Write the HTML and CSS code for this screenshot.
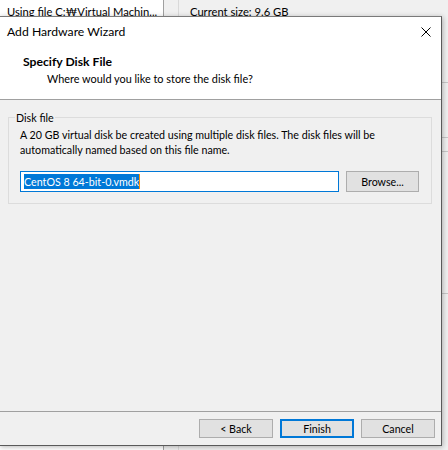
FILE: index.html
```html
<!DOCTYPE html>
<html>
<head>
<meta charset="utf-8">
<link rel="stylesheet" href="styles.css">
</head>
<body>
<div class="desk">
  <div class="bg-win">
    <div class="bg-left">
      <div class="bg-file">Using file C:₩Virtual Machin...</div>
    </div>
    <div class="bg-mid"></div>
    <div class="bg-right">
      <div class="bg-size">Current size: 9.6 GB</div>
      <div class="bg-row r1"></div>
      <div class="bg-row r2"></div>
      <div class="bg-row r3"></div>
      <div class="bg-row r4"></div>
    </div>
  </div>

  <div class="dialog">
    <div class="titlebar">
      <span class="title">Add Hardware Wizard</span>
      <svg class="close" width="10" height="10" viewBox="0 0 10 10">
        <path d="M0.5 0.5 L9.5 9.5 M9.5 0.5 L0.5 9.5" stroke="#000" stroke-width="1" fill="none"/>
      </svg>
    </div>
    <div class="header">
      <div class="h-title">Specify Disk File</div>
      <div class="h-sub">Where would you like to store the disk file?</div>
    </div>
    <div class="content">
      <fieldset class="group">
        <legend class="legend">Disk file</legend>
        <p class="desc">A 20 GB virtual disk be created using multiple disk files. The disk files will be automatically named based on this file name.</p>
        <div class="file-row">
          <div class="input"><span class="sel">CentOS 8 64-bit-0.vmdk</span></div>
          <button class="btn browse">Browse...</button>
        </div>
      </fieldset>
    </div>
    <div class="footer">
      <button class="btn">&lt; Back</button>
      <button class="btn default">Finish</button>
      <button class="btn">Cancel</button>
    </div>
  </div>
</div>
</body>
</html>
```

FILE: styles.css
```css
* { box-sizing: border-box; }
html, body { margin: 0; padding: 0; }
body {
  font-family: Lato, "Noto Sans", sans-serif;
  font-size: 10.7px;
  color: #000;
  background: #f0f0f0;
}
.desk {
  position: relative;
  width: 448px;
  height: 450px;
  overflow: hidden;
  background: #f0f0f0;
}
.bg-win {
  display: grid;
  grid-template-columns: 164px 15px 1fr;
  height: 450px;
}
.bg-left {
  background: #fff;
  border-right: 1px solid #a0a0a0;
}
.bg-file {
  padding: 4px 0 0 7px;
  line-height: 15px;
  font-size: 11.2px;
  white-space: nowrap;
}
.bg-mid {
  border-right: 1px solid #d9d9d9;
}
.bg-right {
  display: flex;
  flex-direction: column;
}
.bg-size {
  padding: 4px 0 0 11px;
  line-height: 15px;
  font-size: 11.2px;
  height: 82px;
}
.bg-row { border-bottom: 1px solid #c8c8c8; }
.r1 { height: 1px; }
.r2 { height: 55px; }
.r3 { height: 14px; }
.r4 { height: 142px; }

.dialog {
  position: absolute;
  left: -1px;
  top: 16px;
  width: 443px;
  height: 430px;
  border: 1px solid #7a7a7a;
  border-right-color: #5a5a5a;
  border-bottom-color: #5a5a5a;
  background: #f0f0f0;
  box-shadow: 1px 1px 5px rgba(0,0,0,0.28);
  display: flex;
  flex-direction: column;
}
.titlebar {
  height: 30px;
  background: #fff;
  display: flex;
  align-items: center;
  justify-content: space-between;
  padding: 0 10px 0 7px;
}
.title {
  line-height: 30px;
  font-size: 12.2px;
}
.close { display: block; }
.header {
  height: 53px;
  background: #fff;
  border-bottom: 1px solid #a0a0a0;
  padding: 7px 0 0 23px;
}
.h-title {
  font-weight: bold;
  font-size: 12.2px;
  line-height: 16px;
}
.h-sub {
  margin: 1px 0 0 24px;
  line-height: 16px;
  font-size: 10.9px;
}
.content {
  flex: 1;
  padding: 10px 9px 0 8px;
}
.group {
  margin: 0;
  border: 1px solid #dcdcdc;
  padding: 2px 11px 11px 11px;
  min-width: 0;
}
.legend {
  padding: 0 1px;
  margin-left: -5px;
  line-height: 15px;
}
.desc {
  margin: 0;
  line-height: 15px;
}
.file-row {
  display: flex;
  gap: 7px;
  margin-top: 14px;
}
.input {
  width: 319px;
  height: 21px;
  border: 1px solid #0078d7;
  background: #fff;
  padding: 2px 0 0 3px;
  line-height: 15px;
  white-space: nowrap;
}
.sel {
  background: #0078d7;
  color: #fff;
  border-right: 1px solid #ff8c00;
  display: inline-block;
  line-height: 15px;
}
.btn {
  font-family: Lato, "Noto Sans", sans-serif;
  font-size: 10.7px;
  color: #000;
  background: #e1e1e1;
  border: 1px solid #adadad;
  padding: 0;
  margin: 0;
  width: 74px;
  height: 19px;
  line-height: 16px;
}
.browse {
  width: 73px;
  height: 21px;
}
.footer {
  height: 34px;
  border-top: 1px solid #a0a0a0;
  display: flex;
  justify-content: flex-end;
  gap: 7px;
  padding: 7px 6px 0 0;
}
.default {
  border: 2px solid #0078d7;
}
```
